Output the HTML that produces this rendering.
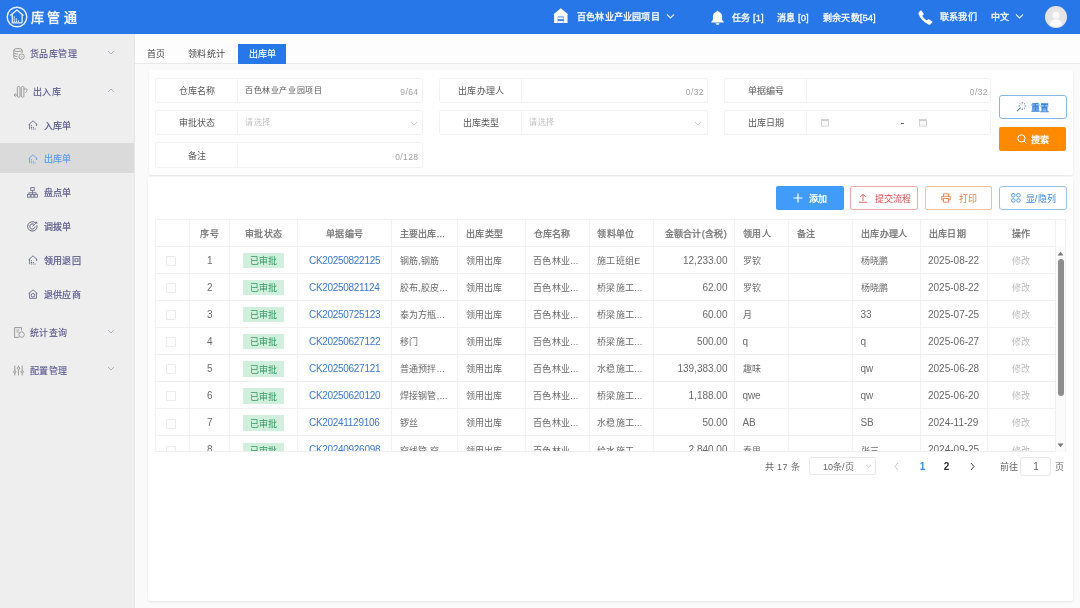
<!DOCTYPE html>
<html lang="zh-CN">
<head>
<meta charset="utf-8">
<style>
*{box-sizing:border-box;margin:0;padding:0}
html,body{width:1080px;height:608px;overflow:hidden;background:#f9f9f9;font-family:"Liberation Sans",sans-serif;color:#555;position:relative}
.abs{position:absolute}
#hdr{position:absolute;left:0;top:0;width:1080px;height:34px;background:#2877e8;color:#fff;z-index:5}
.t{position:absolute;white-space:nowrap;line-height:1}
</style>
</head>
<body>
<div style="position:absolute;left:0;top:0;width:1080px;height:608px;overflow:hidden;filter:blur(0.3px)">
<div class="abs" style="left:0px;top:34px;width:134px;height:574px;background:#eeeeef"></div>
<div class="abs" style="left:134px;top:34px;width:1px;height:574px;background:#e6e6e6"></div>
<div class="abs" style="left:0px;top:143px;width:134px;height:30px;background:#dadada"></div>
<svg class="abs" style="left:13px;top:47.5px" width="12" height="12" viewBox="0 0 12 12"><ellipse cx="5" cy="2" rx="4.2" ry="1.5" fill="none" stroke="#929292" stroke-width="0.9"/><path d="M0.8 2v7.6c0 0.8 1.9 1.5 4.2 1.5M9.2 2v3M0.8 4.6c0 0.8 1.9 1.5 4.2 1.5M0.8 7.1c0 0.8 1.9 1.5 3.6 1.5" fill="none" stroke="#929292" stroke-width="0.9"/><circle cx="8.6" cy="8.6" r="2.7" fill="#eeeeef" stroke="#929292" stroke-width="0.9"/><path d="M7.4 8.6l0.9 0.9 1.5-1.6" fill="none" stroke="#929292" stroke-width="0.8"/></svg>
<div class="t" style="top:50.30px;font-size:9px;letter-spacing:0.4px;color:#55558a;-webkit-text-stroke:0.1px #55558a;left:30px;">货品库管理</div>
<svg class="abs" style="left:107px;top:50px" width="8" height="5" viewBox="0 0 8 5"><path d="M1 1 L4.0 4 L7 1" fill="none" stroke="#a8a8b4" stroke-width="0.9"/></svg>
<svg class="abs" style="left:13px;top:85.5px" width="15" height="12" viewBox="0 0 15 12"><rect x="4.3" y="0.6" width="2.6" height="10.6" rx="1" fill="none" stroke="#929292" stroke-width="0.9"/><rect x="8.3" y="0.6" width="2.6" height="10.6" rx="1" fill="none" stroke="#929292" stroke-width="0.9"/><path d="M4.3 9 H1 M2.6 7.4 L1 9 L2.6 10.6 M10.9 3 H13.6 C14.2 3 14.2 4.6 13.6 5.5 L12.4 6.8" fill="none" stroke="#929292" stroke-width="0.9"/></svg>
<div class="t" style="top:88.10px;font-size:9px;letter-spacing:0.4px;color:#55558a;-webkit-text-stroke:0.1px #55558a;left:33px;">出入库</div>
<svg class="abs" style="left:107px;top:88px" width="8" height="5" viewBox="0 0 8 5"><path d="M1 4 L4.0 1 L7 4" fill="none" stroke="#a8a8b4" stroke-width="0.9"/></svg>
<svg class="abs" style="left:28px;top:120px" width="10" height="10" viewBox="0 0 10 10"><path d="M0.6 4.8 L5 0.8 L9.4 4.8 M1.6 3.9 V9.3 M8.4 3.9 V6" fill="none" stroke="#6a6a88" stroke-width="0.9"/><path d="M3 5.2h1v1H3zM3 7h1v1H3zM4.8 7h1v1h-1zM3 8.6h1v0.8H3zM4.8 8.6h1v0.8h-1zM6.6 8.6h1v0.8h-1z" fill="#6a6a88"/></svg>
<div class="t" style="top:121.60px;font-size:9px;letter-spacing:0.4px;color:#55558a;-webkit-text-stroke:0.2px #55558a;left:43.6px;">入库单</div>
<svg class="abs" style="left:28px;top:153.5px" width="10" height="10" viewBox="0 0 10 10"><path d="M0.6 4.8 L5 0.8 L9.4 4.8 M1.6 3.9 V9.3 M8.4 3.9 V6" fill="none" stroke="#6aa3e8" stroke-width="0.9"/><path d="M3 5.2h1v1H3zM3 7h1v1H3zM4.8 7h1v1h-1zM3 8.6h1v0.8H3zM4.8 8.6h1v0.8h-1zM6.6 8.6h1v0.8h-1z" fill="#6aa3e8"/></svg>
<div class="t" style="top:154.80px;font-size:9px;letter-spacing:0.4px;color:#5b9be8;-webkit-text-stroke:0.2px #5b9be8;left:43.6px;">出库单</div>
<svg class="abs" style="left:27px;top:187px" width="11" height="11" viewBox="0 0 11 11"><rect x="3.8" y="0.6" width="3.4" height="2.9" fill="none" stroke="#6a6a88" stroke-width="0.85"/><path d="M5.5 3.5v2.2M1.9 7.4V5.7h7.2v1.7M5.5 5.7v1.7" fill="none" stroke="#6a6a88" stroke-width="0.85"/><rect x="0.5" y="7.4" width="2.8" height="2.8" fill="none" stroke="#6a6a88" stroke-width="0.85"/><rect x="4.1" y="7.4" width="2.8" height="2.8" fill="none" stroke="#6a6a88" stroke-width="0.85"/><rect x="7.7" y="7.4" width="2.8" height="2.8" fill="none" stroke="#6a6a88" stroke-width="0.85"/></svg>
<div class="t" style="top:189.00px;font-size:9px;letter-spacing:0.4px;color:#55558a;-webkit-text-stroke:0.2px #55558a;left:43.6px;">盘点单</div>
<svg class="abs" style="left:27px;top:221px" width="11" height="11" viewBox="0 0 11 11"><path d="M8.7 2.1 A4.7 4.7 0 1 0 9.9 4.2" fill="none" stroke="#6a6a88" stroke-width="1"/><path d="M7.2 3.6 A2.6 2.6 0 1 0 8 5.5" fill="none" stroke="#6a6a88" stroke-width="1"/><path d="M5.5 5.5 L9.6 1.4 M8.2 1.2 H9.8 V2.8" fill="none" stroke="#6a6a88" stroke-width="0.9"/></svg>
<div class="t" style="top:222.90px;font-size:9px;letter-spacing:0.4px;color:#55558a;-webkit-text-stroke:0.2px #55558a;left:43.6px;">调拨单</div>
<svg class="abs" style="left:28px;top:255px" width="10" height="10" viewBox="0 0 10 10"><path d="M0.6 4.8 L5 0.8 L9.4 4.8 M1.6 3.9 V9.3 M8.4 3.9 V6" fill="none" stroke="#6a6a88" stroke-width="0.9"/><path d="M3 5.2h1v1H3zM3 7h1v1H3zM4.8 7h1v1h-1zM3 8.6h1v0.8H3zM4.8 8.6h1v0.8h-1zM6.6 8.6h1v0.8h-1z" fill="#6a6a88"/></svg>
<div class="t" style="top:256.70px;font-size:9px;letter-spacing:0.4px;color:#55558a;-webkit-text-stroke:0.2px #55558a;left:43.6px;">领用退回</div>
<svg class="abs" style="left:28px;top:289px" width="10" height="10" viewBox="0 0 10 10"><path d="M0.6 4.6 L5 0.8 L9.4 4.6 M1.6 3.8 V9.3 H8.4 V3.8" fill="none" stroke="#6a6a88" stroke-width="0.9"/><circle cx="5" cy="6.3" r="1.8" fill="none" stroke="#6a6a88" stroke-width="0.9"/></svg>
<div class="t" style="top:290.50px;font-size:9px;letter-spacing:0.4px;color:#55558a;-webkit-text-stroke:0.2px #55558a;left:43.6px;">退供应商</div>
<svg class="abs" style="left:14px;top:327px" width="11" height="11" viewBox="0 0 11 11"><path d="M7.5 0.6H0.6V10.4H5 M7.5 0.6V3.5" fill="none" stroke="#929292" stroke-width="0.9"/><circle cx="7.6" cy="7.6" r="2.7" fill="none" stroke="#929292" stroke-width="0.9"/><path d="M2.3 3h3M2.3 5h2.5" stroke="#929292" stroke-width="0.8"/></svg>
<div class="t" style="top:329.30px;font-size:9px;letter-spacing:0.4px;color:#55558a;-webkit-text-stroke:0.1px #55558a;left:30px;">统计查询</div>
<svg class="abs" style="left:107px;top:329px" width="8" height="5" viewBox="0 0 8 5"><path d="M1 1 L4.0 4 L7 1" fill="none" stroke="#a8a8b4" stroke-width="0.9"/></svg>
<svg class="abs" style="left:13px;top:364.5px" width="11" height="11" viewBox="0 0 11 11"><path d="M1.8 0.5V10.5M5.5 0.5V10.5M9.2 0.5V10.5" stroke="#929292" stroke-width="0.9"/><circle cx="1.8" cy="6.8" r="1.2" fill="#eeeeef" stroke="#929292" stroke-width="0.9"/><circle cx="5.5" cy="3.2" r="1.2" fill="#eeeeef" stroke="#929292" stroke-width="0.9"/><circle cx="9.2" cy="6.8" r="1.2" fill="#eeeeef" stroke="#929292" stroke-width="0.9"/></svg>
<div class="t" style="top:367.00px;font-size:9px;letter-spacing:0.4px;color:#55558a;-webkit-text-stroke:0.1px #55558a;left:30px;">配置管理</div>
<svg class="abs" style="left:107px;top:366px" width="8" height="5" viewBox="0 0 8 5"><path d="M1 1 L4.0 4 L7 1" fill="none" stroke="#a8a8b4" stroke-width="0.9"/></svg>
<div class="abs" style="left:135px;top:34px;width:945px;height:574px;background:#fafafa"></div>
<div class="abs" style="left:135px;top:34px;width:945px;height:30px;background:#fdfdfd"></div>
<div class="abs" style="left:135px;top:63px;width:945px;height:1px;background:#e9e9e9"></div>
<div class="t" style="top:50.00px;font-size:9px;letter-spacing:0.3px;color:#444;left:147px;">首页</div>
<div class="t" style="top:50.00px;font-size:9px;letter-spacing:0.3px;color:#444;left:188px;">领料统计</div>
<div class="abs" style="left:238px;top:44px;width:48px;height:20px;background:#2877e8"></div>
<div class="t" style="top:50.00px;font-size:9px;letter-spacing:0.3px;color:#fff;-webkit-text-stroke:0.15px #fff;left:248.5px;">出库单</div>
<div class="abs" style="left:148.5px;top:69.5px;width:924.5px;height:105.5px;background:#fff;box-shadow:0 1px 2px rgba(0,0,0,0.09);border-radius:2px"></div>
<div class="abs" style="left:155px;top:78px;width:267.5px;height:25.3px;border:1px solid #f2f2f2;border-radius:2.5px"></div>
<div class="abs" style="left:237px;top:78px;width:1px;height:25.3px;background:#f2f2f2"></div>
<div class="t" style="top:87.45px;font-size:9px;letter-spacing:0.3px;color:#585858;left:97.19999999999999px;width:200px;text-align:center;">仓库名称</div>
<div class="abs" style="left:439px;top:78px;width:268.5px;height:25.3px;border:1px solid #f2f2f2;border-radius:2.5px"></div>
<div class="abs" style="left:521px;top:78px;width:1px;height:25.3px;background:#f2f2f2"></div>
<div class="t" style="top:87.45px;font-size:9px;letter-spacing:0.3px;color:#585858;left:381.2px;width:200px;text-align:center;">出库办理人</div>
<div class="abs" style="left:724px;top:78px;width:267px;height:25.3px;border:1px solid #f2f2f2;border-radius:2.5px"></div>
<div class="abs" style="left:806px;top:78px;width:1px;height:25.3px;background:#f2f2f2"></div>
<div class="t" style="top:87.45px;font-size:9px;letter-spacing:0.3px;color:#585858;left:666.2px;width:200px;text-align:center;">单据编号</div>
<div class="abs" style="left:155px;top:110px;width:267.5px;height:25.3px;border:1px solid #f2f2f2;border-radius:2.5px"></div>
<div class="abs" style="left:237px;top:110px;width:1px;height:25.3px;background:#f2f2f2"></div>
<div class="t" style="top:119.45px;font-size:9px;letter-spacing:0.3px;color:#585858;left:97.19999999999999px;width:200px;text-align:center;">审批状态</div>
<div class="abs" style="left:439px;top:110px;width:268.5px;height:25.3px;border:1px solid #f2f2f2;border-radius:2.5px"></div>
<div class="abs" style="left:521px;top:110px;width:1px;height:25.3px;background:#f2f2f2"></div>
<div class="t" style="top:119.45px;font-size:9px;letter-spacing:0.3px;color:#585858;left:381.2px;width:200px;text-align:center;">出库类型</div>
<div class="abs" style="left:724px;top:110px;width:267px;height:25.3px;border:1px solid #f2f2f2;border-radius:2.5px"></div>
<div class="abs" style="left:806px;top:110px;width:1px;height:25.3px;background:#f2f2f2"></div>
<div class="t" style="top:119.45px;font-size:9px;letter-spacing:0.3px;color:#585858;left:666.2px;width:200px;text-align:center;">出库日期</div>
<div class="abs" style="left:155px;top:142.3px;width:267.5px;height:25.3px;border:1px solid #f2f2f2;border-radius:2.5px"></div>
<div class="abs" style="left:237px;top:142.3px;width:1px;height:25.3px;background:#f2f2f2"></div>
<div class="t" style="top:151.75px;font-size:9px;letter-spacing:0.3px;color:#585858;left:97.19999999999999px;width:200px;text-align:center;">备注</div>
<div class="t" style="top:87.40px;font-size:8px;letter-spacing:0.6px;color:#555;left:245px;">百色林业产业园项目</div>
<div class="t" style="top:87.75px;font-size:8.5px;letter-spacing:0.4px;color:#a0a0a0;right:661.5px;">9/64</div>
<div class="t" style="top:87.75px;font-size:8.5px;letter-spacing:0.4px;color:#a0a0a0;right:376px;">0/32</div>
<div class="t" style="top:87.75px;font-size:8.5px;letter-spacing:0.4px;color:#a0a0a0;right:92px;">0/32</div>
<div class="t" style="top:119.40px;font-size:8px;letter-spacing:0.6px;color:#c2c2c2;left:245px;">请选择</div>
<svg class="abs" style="left:410px;top:120.5px" width="8" height="5" viewBox="0 0 8 5"><path d="M1 1 L4.0 4 L7 1" fill="none" stroke="#c0c0c0" stroke-width="0.9"/></svg>
<div class="t" style="top:119.40px;font-size:8px;letter-spacing:0.6px;color:#c2c2c2;left:529px;">请选择</div>
<svg class="abs" style="left:694px;top:120.5px" width="8" height="5" viewBox="0 0 8 5"><path d="M1 1 L4.0 4 L7 1" fill="none" stroke="#c0c0c0" stroke-width="0.9"/></svg>
<div class="t" style="top:152.55px;font-size:8.5px;letter-spacing:0.4px;color:#a0a0a0;right:661.5px;">0/128</div>
<svg class="abs" style="left:821px;top:119px" width="8" height="8" viewBox="0 0 8 8"><rect x="0.5" y="0.5" width="7" height="6.6" fill="none" stroke="#cfcfcf" stroke-width="0.9"/><path d="M0.5 1.6h7" stroke="#cfcfcf" stroke-width="1.2"/><path d="M1.5 4h5M1.5 5.5h5" stroke="#ececec" stroke-width="0.7"/></svg>
<div class="abs" style="left:901px;top:123px;width:3px;height:1px;background:#666"></div>
<svg class="abs" style="left:919px;top:119px" width="8" height="8" viewBox="0 0 8 8"><rect x="0.5" y="0.5" width="7" height="6.6" fill="none" stroke="#cfcfcf" stroke-width="0.9"/><path d="M0.5 1.6h7" stroke="#cfcfcf" stroke-width="1.2"/><path d="M1.5 4h5M1.5 5.5h5" stroke="#ececec" stroke-width="0.7"/></svg>
<div class="abs" style="left:999px;top:94.5px;width:67.5px;height:24px;border:1px solid #86b6ec;border-radius:3px;background:#fff"></div>
<svg class="abs" style="left:1016px;top:100px" width="13" height="12" viewBox="0 0 13 12"><path d="M1 11.2 L4.6 7.6" stroke="#5579b0" stroke-width="1.1"/><path d="M6.3 2v1.6M6.3 8.4V10M2.4 6H4M8.6 6h1.6M3.6 3.3l1.1 1.1M9 3.3L7.9 4.4M9 8.7L7.9 7.6" stroke="#5579b0" stroke-width="0.9"/></svg>
<div class="t" style="top:103.60px;font-size:9px;letter-spacing:0.3px;color:#3d86dc;font-weight:bold;left:1031px;">重置</div>
<div class="abs" style="left:999px;top:126.5px;width:67px;height:24px;border-radius:2px;background:#ff8a00"></div>
<svg class="abs" style="left:1016.5px;top:134px" width="10" height="10" viewBox="0 0 10 10"><circle cx="4.4" cy="4.4" r="3.6" fill="none" stroke="#fff" stroke-width="1"/><path d="M7 7 L9.3 9.3" stroke="#fff" stroke-width="1"/></svg>
<div class="t" style="top:135.50px;font-size:9px;letter-spacing:0.3px;color:#fff;font-weight:bold;left:1031px;">搜索</div>
<div class="abs" style="left:148px;top:177px;width:925px;height:423.5px;background:#fff;box-shadow:0 1px 2px rgba(0,0,0,0.09);border-radius:2px"></div>
<div class="abs" style="left:776px;top:186px;width:68px;height:24px;border-radius:2px;background:#409cf8"></div>
<svg class="abs" style="left:792.5px;top:193px" width="10" height="10" viewBox="0 0 10 10"><path d="M5 0.5V9.5M0.5 5H9.5" stroke="#fff" stroke-width="1.2"/></svg>
<div class="t" style="top:195.10px;font-size:9px;letter-spacing:0.3px;color:#fff;font-weight:bold;left:809px;">添加</div>
<div class="abs" style="left:850px;top:186px;width:68px;height:24px;border:1px solid #eaa8a8;border-radius:2px;background:#fff"></div>
<svg class="abs" style="left:858px;top:193px" width="10" height="10" viewBox="0 0 10 10"><path d="M5 8V1.2M2.2 4L5 1.2 7.8 4M0.8 9.3H9.2" fill="none" stroke="#e05a5a" stroke-width="0.9"/></svg>
<div class="t" style="top:195.10px;font-size:9px;letter-spacing:0.3px;color:#de4848;left:874.5px;">提交流程</div>
<div class="abs" style="left:925px;top:186px;width:67px;height:24px;border:1px solid #f0c0a4;border-radius:2px;background:#fff"></div>
<svg class="abs" style="left:941px;top:193px" width="10" height="10" viewBox="0 0 10 10"><path d="M2.5 3.3V0.8h5v2.5M2.5 7H0.8V3.3h8.4V7H7.5M2.5 5.5h5v3.7h-5z" fill="none" stroke="#e8804a" stroke-width="0.9"/></svg>
<div class="t" style="top:195.10px;font-size:9px;letter-spacing:0.3px;color:#e27a40;left:958.5px;">打印</div>
<div class="abs" style="left:999px;top:186px;width:67.5px;height:24px;border:1px solid #98c2ee;border-radius:3px;background:#fff"></div>
<svg class="abs" style="left:1010.5px;top:193px" width="10" height="10" viewBox="0 0 10 10"><circle cx="2.3" cy="2.3" r="1.8" fill="none" stroke="#4a8fe0" stroke-width="0.9"/><circle cx="7.5" cy="2.3" r="1.8" fill="none" stroke="#4a8fe0" stroke-width="0.9"/><circle cx="2.3" cy="7.5" r="1.8" fill="none" stroke="#4a8fe0" stroke-width="0.9"/><circle cx="7.5" cy="7.5" r="1.8" fill="none" stroke="#4a8fe0" stroke-width="0.9"/></svg>
<div class="t" style="top:195.10px;font-size:9px;letter-spacing:0.3px;color:#3a84da;left:1025.5px;">显/隐列</div>
<div class="abs" style="left:155px;top:219.4px;width:910.5px;height:232.29999999999998px;overflow:hidden;border:1px solid #f2f2f2;border-bottom:none">
<div class="abs" style="left:32.90px;top:0;width:1px;height:232.29999999999998px;background:#f2f2f2"></div>
<div class="abs" style="left:73.40px;top:0;width:1px;height:232.29999999999998px;background:#f2f2f2"></div>
<div class="abs" style="left:141.00px;top:0;width:1px;height:232.29999999999998px;background:#f2f2f2"></div>
<div class="abs" style="left:234.90px;top:0;width:1px;height:232.29999999999998px;background:#f2f2f2"></div>
<div class="abs" style="left:301.40px;top:0;width:1px;height:232.29999999999998px;background:#f2f2f2"></div>
<div class="abs" style="left:369.00px;top:0;width:1px;height:232.29999999999998px;background:#f2f2f2"></div>
<div class="abs" style="left:432.70px;top:0;width:1px;height:232.29999999999998px;background:#f2f2f2"></div>
<div class="abs" style="left:497.40px;top:0;width:1px;height:232.29999999999998px;background:#f2f2f2"></div>
<div class="abs" style="left:578.40px;top:0;width:1px;height:232.29999999999998px;background:#f2f2f2"></div>
<div class="abs" style="left:631.90px;top:0;width:1px;height:232.29999999999998px;background:#f2f2f2"></div>
<div class="abs" style="left:696.40px;top:0;width:1px;height:232.29999999999998px;background:#f2f2f2"></div>
<div class="abs" style="left:764.10px;top:0;width:1px;height:232.29999999999998px;background:#f2f2f2"></div>
<div class="abs" style="left:830.60px;top:0;width:1px;height:232.29999999999998px;background:#f2f2f2"></div>
<div class="abs" style="left:898.70px;top:0;width:1px;height:232.29999999999998px;background:#f2f2f2"></div>
<div class="abs" style="left:0;top:25.40px;width:900.3px;height:1px;background:#f0f0f0"></div>
<div class="abs" style="left:0;top:52.50px;width:900.3px;height:1px;background:#f0f0f0"></div>
<div class="abs" style="left:0;top:79.60px;width:900.3px;height:1px;background:#f0f0f0"></div>
<div class="abs" style="left:0;top:106.70px;width:900.3px;height:1px;background:#f0f0f0"></div>
<div class="abs" style="left:0;top:133.80px;width:900.3px;height:1px;background:#f0f0f0"></div>
<div class="abs" style="left:0;top:160.90px;width:900.3px;height:1px;background:#f0f0f0"></div>
<div class="abs" style="left:0;top:188.00px;width:900.3px;height:1px;background:#f0f0f0"></div>
<div class="abs" style="left:0;top:215.10px;width:900.3px;height:1px;background:#f0f0f0"></div>
<div class="abs" style="left:0;top:242.20px;width:900.3px;height:1px;background:#f0f0f0"></div>
</div>
<div class="abs" style="left:0;top:0;width:1080px;height:451.7px;overflow:hidden">
<div class="t" style="top:230.40px;font-size:9px;letter-spacing:0.3px;color:#727272;-webkit-text-stroke:0.25px #727272;left:109.75px;width:200px;text-align:center;">序号</div>
<div class="t" style="top:230.40px;font-size:9px;letter-spacing:0.3px;color:#727272;-webkit-text-stroke:0.25px #727272;left:163.8px;width:200px;text-align:center;">审批状态</div>
<div class="t" style="top:230.40px;font-size:9px;letter-spacing:0.3px;color:#727272;-webkit-text-stroke:0.25px #727272;left:244.55px;width:200px;text-align:center;">单据编号</div>
<div class="t" style="top:230.40px;font-size:9px;letter-spacing:0.3px;color:#727272;-webkit-text-stroke:0.25px #727272;left:399.5px;">主要出库...</div>
<div class="t" style="top:230.40px;font-size:9px;letter-spacing:0.3px;color:#727272;-webkit-text-stroke:0.25px #727272;left:466px;">出库类型</div>
<div class="t" style="top:230.40px;font-size:9px;letter-spacing:0.3px;color:#727272;-webkit-text-stroke:0.25px #727272;left:533.6px;">仓库名称</div>
<div class="t" style="top:230.40px;font-size:9px;letter-spacing:0.3px;color:#727272;-webkit-text-stroke:0.25px #727272;left:597.3px;">领料单位</div>
<div class="t" style="top:230.40px;font-size:9px;letter-spacing:0.3px;color:#727272;-webkit-text-stroke:0.25px #727272;right:353px;">金额合计(含税)</div>
<div class="t" style="top:230.40px;font-size:9px;letter-spacing:0.3px;color:#727272;-webkit-text-stroke:0.25px #727272;left:743px;">领用人</div>
<div class="t" style="top:230.40px;font-size:9px;letter-spacing:0.3px;color:#727272;-webkit-text-stroke:0.25px #727272;left:796.5px;">备注</div>
<div class="t" style="top:230.40px;font-size:9px;letter-spacing:0.3px;color:#727272;-webkit-text-stroke:0.25px #727272;left:861px;">出库办理人</div>
<div class="t" style="top:230.40px;font-size:9px;letter-spacing:0.3px;color:#727272;-webkit-text-stroke:0.25px #727272;left:928.7px;">出库日期</div>
<div class="t" style="top:230.40px;font-size:9px;letter-spacing:0.3px;color:#727272;-webkit-text-stroke:0.25px #727272;left:921.25px;width:200px;text-align:center;">操作</div>
<div class="abs" style="left:165.8px;top:255.95px;width:10px;height:10px;border:1px solid #ebebeb;border-radius:1px;background:#fff"></div>
<div class="t" style="top:255.55px;font-size:10px;letter-spacing:0px;color:#6a6a6a;left:109.75px;width:200px;text-align:center;">1</div>
<div class="abs" style="left:243px;top:252.85px;width:41px;height:15.3px;background:#d0efdd"></div>
<div class="t" style="top:257.15px;font-size:9px;letter-spacing:0.3px;color:#2f9a60;left:163.5px;width:200px;text-align:center;">已审批</div>
<div class="t" style="top:255.55px;font-size:10px;letter-spacing:-0.3px;color:#3c78cc;left:309px;">CK20250822125</div>
<div class="t" style="top:256.85px;font-size:9px;letter-spacing:0.3px;color:#6a6a6a;left:399.5px;">钢筋,钢筋</div>
<div class="t" style="top:256.85px;font-size:9px;letter-spacing:0.3px;color:#6a6a6a;left:465.5px;">领用出库</div>
<div class="t" style="top:256.85px;font-size:9px;letter-spacing:0.3px;color:#6a6a6a;left:533px;">百色林业...</div>
<div class="t" style="top:256.85px;font-size:9px;letter-spacing:0.3px;color:#6a6a6a;left:597px;">施工班组E</div>
<div class="t" style="top:255.55px;font-size:10px;letter-spacing:0px;color:#6a6a6a;right:352.5px;">12,233.00</div>
<div class="t" style="top:256.85px;font-size:9px;letter-spacing:0.3px;color:#6a6a6a;left:742.5px;">罗钦</div>
<div class="t" style="top:256.85px;font-size:9px;letter-spacing:0.3px;color:#6a6a6a;left:860.5px;">杨晓鹏</div>
<div class="t" style="top:255.55px;font-size:10px;letter-spacing:0px;color:#6a6a6a;left:928px;">2025-08-22</div>
<div class="t" style="top:256.85px;font-size:9px;letter-spacing:0.3px;color:#bbb;left:921px;width:200px;text-align:center;">修改</div>
<div class="abs" style="left:165.8px;top:283.05px;width:10px;height:10px;border:1px solid #ebebeb;border-radius:1px;background:#fff"></div>
<div class="t" style="top:282.65px;font-size:10px;letter-spacing:0px;color:#6a6a6a;left:109.75px;width:200px;text-align:center;">2</div>
<div class="abs" style="left:243px;top:279.95px;width:41px;height:15.3px;background:#d0efdd"></div>
<div class="t" style="top:284.25px;font-size:9px;letter-spacing:0.3px;color:#2f9a60;left:163.5px;width:200px;text-align:center;">已审批</div>
<div class="t" style="top:282.65px;font-size:10px;letter-spacing:-0.3px;color:#3c78cc;left:309px;">CK20250821124</div>
<div class="t" style="top:283.95px;font-size:9px;letter-spacing:0.3px;color:#6a6a6a;left:399.5px;">胶布,胶皮...</div>
<div class="t" style="top:283.95px;font-size:9px;letter-spacing:0.3px;color:#6a6a6a;left:465.5px;">领用出库</div>
<div class="t" style="top:283.95px;font-size:9px;letter-spacing:0.3px;color:#6a6a6a;left:533px;">百色林业...</div>
<div class="t" style="top:283.95px;font-size:9px;letter-spacing:0.3px;color:#6a6a6a;left:597px;">桥梁施工...</div>
<div class="t" style="top:282.65px;font-size:10px;letter-spacing:0px;color:#6a6a6a;right:352.5px;">62.00</div>
<div class="t" style="top:283.95px;font-size:9px;letter-spacing:0.3px;color:#6a6a6a;left:742.5px;">罗钦</div>
<div class="t" style="top:283.95px;font-size:9px;letter-spacing:0.3px;color:#6a6a6a;left:860.5px;">杨晓鹏</div>
<div class="t" style="top:282.65px;font-size:10px;letter-spacing:0px;color:#6a6a6a;left:928px;">2025-08-22</div>
<div class="t" style="top:283.95px;font-size:9px;letter-spacing:0.3px;color:#bbb;left:921px;width:200px;text-align:center;">修改</div>
<div class="abs" style="left:165.8px;top:310.15px;width:10px;height:10px;border:1px solid #ebebeb;border-radius:1px;background:#fff"></div>
<div class="t" style="top:309.75px;font-size:10px;letter-spacing:0px;color:#6a6a6a;left:109.75px;width:200px;text-align:center;">3</div>
<div class="abs" style="left:243px;top:307.05px;width:41px;height:15.3px;background:#d0efdd"></div>
<div class="t" style="top:311.35px;font-size:9px;letter-spacing:0.3px;color:#2f9a60;left:163.5px;width:200px;text-align:center;">已审批</div>
<div class="t" style="top:309.75px;font-size:10px;letter-spacing:-0.3px;color:#3c78cc;left:309px;">CK20250725123</div>
<div class="t" style="top:311.05px;font-size:9px;letter-spacing:0.3px;color:#6a6a6a;left:399.5px;">泰为方瓶...</div>
<div class="t" style="top:311.05px;font-size:9px;letter-spacing:0.3px;color:#6a6a6a;left:465.5px;">领用出库</div>
<div class="t" style="top:311.05px;font-size:9px;letter-spacing:0.3px;color:#6a6a6a;left:533px;">百色林业...</div>
<div class="t" style="top:311.05px;font-size:9px;letter-spacing:0.3px;color:#6a6a6a;left:597px;">桥梁施工...</div>
<div class="t" style="top:309.75px;font-size:10px;letter-spacing:0px;color:#6a6a6a;right:352.5px;">60.00</div>
<div class="t" style="top:311.05px;font-size:9px;letter-spacing:0.3px;color:#6a6a6a;left:742.5px;">月</div>
<div class="t" style="top:309.75px;font-size:10px;letter-spacing:-0.1px;color:#6a6a6a;left:860.5px;">33</div>
<div class="t" style="top:309.75px;font-size:10px;letter-spacing:0px;color:#6a6a6a;left:928px;">2025-07-25</div>
<div class="t" style="top:311.05px;font-size:9px;letter-spacing:0.3px;color:#bbb;left:921px;width:200px;text-align:center;">修改</div>
<div class="abs" style="left:165.8px;top:337.25px;width:10px;height:10px;border:1px solid #ebebeb;border-radius:1px;background:#fff"></div>
<div class="t" style="top:336.85px;font-size:10px;letter-spacing:0px;color:#6a6a6a;left:109.75px;width:200px;text-align:center;">4</div>
<div class="abs" style="left:243px;top:334.15px;width:41px;height:15.3px;background:#d0efdd"></div>
<div class="t" style="top:338.45px;font-size:9px;letter-spacing:0.3px;color:#2f9a60;left:163.5px;width:200px;text-align:center;">已审批</div>
<div class="t" style="top:336.85px;font-size:10px;letter-spacing:-0.3px;color:#3c78cc;left:309px;">CK20250627122</div>
<div class="t" style="top:338.15px;font-size:9px;letter-spacing:0.3px;color:#6a6a6a;left:399.5px;">移门</div>
<div class="t" style="top:338.15px;font-size:9px;letter-spacing:0.3px;color:#6a6a6a;left:465.5px;">领用出库</div>
<div class="t" style="top:338.15px;font-size:9px;letter-spacing:0.3px;color:#6a6a6a;left:533px;">百色林业...</div>
<div class="t" style="top:338.15px;font-size:9px;letter-spacing:0.3px;color:#6a6a6a;left:597px;">桥梁施工...</div>
<div class="t" style="top:336.85px;font-size:10px;letter-spacing:0px;color:#6a6a6a;right:352.5px;">500.00</div>
<div class="t" style="top:336.85px;font-size:10px;letter-spacing:-0.1px;color:#6a6a6a;left:742.5px;">q</div>
<div class="t" style="top:336.85px;font-size:10px;letter-spacing:-0.1px;color:#6a6a6a;left:860.5px;">q</div>
<div class="t" style="top:336.85px;font-size:10px;letter-spacing:0px;color:#6a6a6a;left:928px;">2025-06-27</div>
<div class="t" style="top:338.15px;font-size:9px;letter-spacing:0.3px;color:#bbb;left:921px;width:200px;text-align:center;">修改</div>
<div class="abs" style="left:165.8px;top:364.35px;width:10px;height:10px;border:1px solid #ebebeb;border-radius:1px;background:#fff"></div>
<div class="t" style="top:363.95px;font-size:10px;letter-spacing:0px;color:#6a6a6a;left:109.75px;width:200px;text-align:center;">5</div>
<div class="abs" style="left:243px;top:361.25px;width:41px;height:15.3px;background:#d0efdd"></div>
<div class="t" style="top:365.55px;font-size:9px;letter-spacing:0.3px;color:#2f9a60;left:163.5px;width:200px;text-align:center;">已审批</div>
<div class="t" style="top:363.95px;font-size:10px;letter-spacing:-0.3px;color:#3c78cc;left:309px;">CK20250627121</div>
<div class="t" style="top:365.25px;font-size:9px;letter-spacing:0.3px;color:#6a6a6a;left:399.5px;">普通预拌...</div>
<div class="t" style="top:365.25px;font-size:9px;letter-spacing:0.3px;color:#6a6a6a;left:465.5px;">领用出库</div>
<div class="t" style="top:365.25px;font-size:9px;letter-spacing:0.3px;color:#6a6a6a;left:533px;">百色林业...</div>
<div class="t" style="top:365.25px;font-size:9px;letter-spacing:0.3px;color:#6a6a6a;left:597px;">水稳施工...</div>
<div class="t" style="top:363.95px;font-size:10px;letter-spacing:0px;color:#6a6a6a;right:352.5px;">139,383.00</div>
<div class="t" style="top:365.25px;font-size:9px;letter-spacing:0.3px;color:#6a6a6a;left:742.5px;">趣味</div>
<div class="t" style="top:363.95px;font-size:10px;letter-spacing:-0.1px;color:#6a6a6a;left:860.5px;">qw</div>
<div class="t" style="top:363.95px;font-size:10px;letter-spacing:0px;color:#6a6a6a;left:928px;">2025-06-28</div>
<div class="t" style="top:365.25px;font-size:9px;letter-spacing:0.3px;color:#bbb;left:921px;width:200px;text-align:center;">修改</div>
<div class="abs" style="left:165.8px;top:391.45px;width:10px;height:10px;border:1px solid #ebebeb;border-radius:1px;background:#fff"></div>
<div class="t" style="top:391.05px;font-size:10px;letter-spacing:0px;color:#6a6a6a;left:109.75px;width:200px;text-align:center;">6</div>
<div class="abs" style="left:243px;top:388.35px;width:41px;height:15.3px;background:#d0efdd"></div>
<div class="t" style="top:392.65px;font-size:9px;letter-spacing:0.3px;color:#2f9a60;left:163.5px;width:200px;text-align:center;">已审批</div>
<div class="t" style="top:391.05px;font-size:10px;letter-spacing:-0.3px;color:#3c78cc;left:309px;">CK20250620120</div>
<div class="t" style="top:392.35px;font-size:9px;letter-spacing:0.3px;color:#6a6a6a;left:399.5px;">焊接钢管,...</div>
<div class="t" style="top:392.35px;font-size:9px;letter-spacing:0.3px;color:#6a6a6a;left:465.5px;">领用出库</div>
<div class="t" style="top:392.35px;font-size:9px;letter-spacing:0.3px;color:#6a6a6a;left:533px;">百色林业...</div>
<div class="t" style="top:392.35px;font-size:9px;letter-spacing:0.3px;color:#6a6a6a;left:597px;">桥梁施工...</div>
<div class="t" style="top:391.05px;font-size:10px;letter-spacing:0px;color:#6a6a6a;right:352.5px;">1,188.00</div>
<div class="t" style="top:391.05px;font-size:10px;letter-spacing:-0.1px;color:#6a6a6a;left:742.5px;">qwe</div>
<div class="t" style="top:391.05px;font-size:10px;letter-spacing:-0.1px;color:#6a6a6a;left:860.5px;">qw</div>
<div class="t" style="top:391.05px;font-size:10px;letter-spacing:0px;color:#6a6a6a;left:928px;">2025-06-20</div>
<div class="t" style="top:392.35px;font-size:9px;letter-spacing:0.3px;color:#bbb;left:921px;width:200px;text-align:center;">修改</div>
<div class="abs" style="left:165.8px;top:418.55px;width:10px;height:10px;border:1px solid #ebebeb;border-radius:1px;background:#fff"></div>
<div class="t" style="top:418.15px;font-size:10px;letter-spacing:0px;color:#6a6a6a;left:109.75px;width:200px;text-align:center;">7</div>
<div class="abs" style="left:243px;top:415.45px;width:41px;height:15.3px;background:#d0efdd"></div>
<div class="t" style="top:419.75px;font-size:9px;letter-spacing:0.3px;color:#2f9a60;left:163.5px;width:200px;text-align:center;">已审批</div>
<div class="t" style="top:418.15px;font-size:10px;letter-spacing:-0.3px;color:#3c78cc;left:309px;">CK20241129106</div>
<div class="t" style="top:419.45px;font-size:9px;letter-spacing:0.3px;color:#6a6a6a;left:399.5px;">锣丝</div>
<div class="t" style="top:419.45px;font-size:9px;letter-spacing:0.3px;color:#6a6a6a;left:465.5px;">领用出库</div>
<div class="t" style="top:419.45px;font-size:9px;letter-spacing:0.3px;color:#6a6a6a;left:533px;">百色林业...</div>
<div class="t" style="top:419.45px;font-size:9px;letter-spacing:0.3px;color:#6a6a6a;left:597px;">水稳施工...</div>
<div class="t" style="top:418.15px;font-size:10px;letter-spacing:0px;color:#6a6a6a;right:352.5px;">50.00</div>
<div class="t" style="top:418.15px;font-size:10px;letter-spacing:-0.1px;color:#6a6a6a;left:742.5px;">AB</div>
<div class="t" style="top:418.15px;font-size:10px;letter-spacing:-0.1px;color:#6a6a6a;left:860.5px;">SB</div>
<div class="t" style="top:418.15px;font-size:10px;letter-spacing:0px;color:#6a6a6a;left:928px;">2024-11-29</div>
<div class="t" style="top:419.45px;font-size:9px;letter-spacing:0.3px;color:#bbb;left:921px;width:200px;text-align:center;">修改</div>
<div class="abs" style="left:165.8px;top:445.65px;width:10px;height:10px;border:1px solid #ebebeb;border-radius:1px;background:#fff"></div>
<div class="t" style="top:445.25px;font-size:10px;letter-spacing:0px;color:#6a6a6a;left:109.75px;width:200px;text-align:center;">8</div>
<div class="abs" style="left:243px;top:442.55px;width:41px;height:15.3px;background:#d0efdd"></div>
<div class="t" style="top:446.85px;font-size:9px;letter-spacing:0.3px;color:#2f9a60;left:163.5px;width:200px;text-align:center;">已审批</div>
<div class="t" style="top:445.25px;font-size:10px;letter-spacing:-0.3px;color:#3c78cc;left:309px;">CK20240926098</div>
<div class="t" style="top:446.55px;font-size:9px;letter-spacing:0.3px;color:#6a6a6a;left:399.5px;">穿线管,穿...</div>
<div class="t" style="top:446.55px;font-size:9px;letter-spacing:0.3px;color:#6a6a6a;left:465.5px;">领用出库</div>
<div class="t" style="top:446.55px;font-size:9px;letter-spacing:0.3px;color:#6a6a6a;left:533px;">百色林业...</div>
<div class="t" style="top:446.55px;font-size:9px;letter-spacing:0.3px;color:#6a6a6a;left:597px;">给水施工...</div>
<div class="t" style="top:445.25px;font-size:10px;letter-spacing:0px;color:#6a6a6a;right:352.5px;">2,840.00</div>
<div class="t" style="top:446.55px;font-size:9px;letter-spacing:0.3px;color:#6a6a6a;left:742.5px;">秦思</div>
<div class="t" style="top:446.55px;font-size:9px;letter-spacing:0.3px;color:#6a6a6a;left:860.5px;">张三</div>
<div class="t" style="top:445.25px;font-size:10px;letter-spacing:0px;color:#6a6a6a;left:928px;">2024-09-25</div>
<div class="t" style="top:446.55px;font-size:9px;letter-spacing:0.3px;color:#bbb;left:921px;width:200px;text-align:center;">修改</div>
</div>
<div class="abs" style="left:155px;top:450.7px;width:910.5px;height:1px;background:#efefef"></div>
<div class="abs" style="left:1055.3px;top:246.2px;width:10.2px;height:205.5px;background:#fbfbfb;border-left:1px solid #f0f0f0"></div>
<svg class="abs" style="left:1057px;top:250.5px" width="7" height="5" viewBox="0 0 7 5"><path d="M0.5 4.5 L3.5 0.8 L6.5 4.5Z" fill="#777"/></svg>
<svg class="abs" style="left:1057px;top:443px" width="7" height="5" viewBox="0 0 7 5"><path d="M0.5 0.5 L3.5 4.2 L6.5 0.5Z" fill="#777"/></svg>
<div class="abs" style="left:1058px;top:259px;width:6px;height:137px;background:#8e8e8e;border-radius:3px"></div>
<div class="t" style="top:462.60px;font-size:9px;letter-spacing:0.3px;color:#666;left:765px;">共 17 条</div>
<div class="abs" style="left:809.2px;top:457.2px;width:67.3px;height:18px;border:1px solid #e8e8e8;border-radius:2px"></div>
<div class="t" style="top:462.60px;font-size:9px;letter-spacing:0.0px;color:#666;left:823px;">10条/页</div>
<svg class="abs" style="left:865px;top:463.5px" width="7" height="4" viewBox="0 0 7 4"><path d="M1 1 L3.5 3 L6 1" fill="none" stroke="#c0c0c0" stroke-width="0.8"/></svg>
<svg class="abs" style="left:894px;top:462px" width="5" height="9" viewBox="0 0 5 9"><path d="M4 1 L1 4.5 L4 8" fill="none" stroke="#c4c4c4" stroke-width="1"/></svg>
<div class="t" style="top:461.80px;font-size:10px;letter-spacing:0px;color:#3a8ee6;font-weight:bold;left:822.5px;width:200px;text-align:center;">1</div>
<div class="t" style="top:461.80px;font-size:10px;letter-spacing:0px;color:#333;font-weight:bold;left:846.5px;width:200px;text-align:center;">2</div>
<svg class="abs" style="left:970px;top:462px" width="5" height="9" viewBox="0 0 5 9"><path d="M1 1 L4 4.5 L1 8" fill="none" stroke="#444" stroke-width="1"/></svg>
<div class="t" style="top:462.60px;font-size:9px;letter-spacing:0.3px;color:#666;left:999.5px;">前往</div>
<div class="abs" style="left:1020px;top:456.5px;width:31px;height:19px;border:1px solid #e8e8e8;border-radius:3px"></div>
<div class="t" style="top:461.80px;font-size:10px;letter-spacing:0px;color:#666;left:936px;width:200px;text-align:center;">1</div>
<div class="t" style="top:462.60px;font-size:9px;letter-spacing:0.3px;color:#666;left:1054.5px;">页</div>
<div id="hdr">
<svg class="abs" style="left:6px;top:6px" width="22" height="22" viewBox="0 0 22 22"><circle cx="11" cy="11" r="9.8" fill="none" stroke="#e6f0ff" stroke-width="1.4"/><path d="M4.3 9.6 L10.9 3.9 L17.5 9.6 M6.3 8.4 V16.8 H15.4 C15.9 16.8 16.1 16.5 16.1 16 V8.4" fill="none" stroke="#e6f0ff" stroke-width="1.3" stroke-linejoin="round"/><path d="M7.6 10.4h1.3v1.3H7.6zM7.6 12.5h1.3v1.3H7.6zM9.7 12.5h1.3v1.3H9.7zM7.6 14.6h1.3v1.3H7.6zM9.7 14.6h1.3v1.3H9.7zM11.8 14.6h1.3v1.3h-1.3z" fill="#e6f0ff"/></svg>
<div class="t" style="left:31px;top:11px;font-size:13px;font-weight:bold;letter-spacing:3.4px;color:#f4f8ff">库管通</div>
<svg class="abs" style="left:552.5px;top:8px" width="16" height="16" viewBox="0 0 16 16"><path d="M0.2 6.4 L7.8 0.3 L15.4 6.4 L14.5 6.4 V15 H10.9 V8.4 H4.7 V15 H1.1 V6.4 Z" fill="#fff"/><rect x="5" y="9.4" width="5.6" height="1.8" fill="#fff"/><rect x="5" y="12.9" width="5.6" height="2.1" fill="#eaf2ff"/></svg>
<div class="t" style="left:577px;top:13px;font-size:9px;letter-spacing:0.2px;color:#f6f9ff;-webkit-text-stroke:0.35px #f6f9ff">百色林业产业园项目</div>
<svg class="abs" style="left:666px;top:13px" width="9" height="7" viewBox="0 0 9 7"><path d="M1 1.5 L4.5 5 L8 1.5" fill="none" stroke="#dfeaff" stroke-width="1.1"/></svg>
<svg class="abs" style="left:710px;top:10px" width="15" height="15" viewBox="0 0 15 15"><path d="M7.5 0.8c0.7 0 1 0.4 1 0.9 2.4 0.5 3.6 2.4 3.6 5v3.2l1.6 1.9v0.8H1.3v-0.8l1.6-1.9V6.7c0-2.6 1.2-4.5 3.6-5 0-0.5 0.3-0.9 1-0.9z M5.6 13.2h3.8c0 1-0.9 1.6-1.9 1.6s-1.9-0.6-1.9-1.6z" fill="#fff"/></svg>
<div class="t" style="left:732px;top:13px;font-size:9px;letter-spacing:0.2px;color:#f6f9ff;-webkit-text-stroke:0.35px #f6f9ff">任务 <span style="font-weight:normal;font-size:9.5px;letter-spacing:0">[1]</span></div>
<div class="t" style="left:777px;top:13px;font-size:9px;letter-spacing:0.2px;color:#f6f9ff;-webkit-text-stroke:0.35px #f6f9ff">消息 <span style="font-weight:normal;font-size:9.5px;letter-spacing:0">[0]</span></div>
<div class="t" style="left:823px;top:13px;font-size:9px;letter-spacing:0.2px;color:#f6f9ff;-webkit-text-stroke:0.35px #f6f9ff">剩余天数<span style="font-weight:normal;font-size:9.5px;letter-spacing:0">[54]</span></div>
<svg class="abs" style="left:918px;top:10px" width="15" height="15" viewBox="0 0 15 15"><path d="M3.3 0.6 L5.6 3.6 C5.9 4 5.8 4.5 5.4 4.8 L4.3 5.6 C4.9 7.4 6.7 9.7 8.9 10.6 L9.8 9.5 C10.1 9.1 10.6 9 11 9.3 L14.2 11.5 C14.6 11.8 14.6 12.3 14.3 12.6 L12.8 14.1 C12.2 14.7 11.2 14.8 10.4 14.4 C5.8 12.2 2.6 8.6 0.7 4.4 C0.4 3.6 0.5 2.7 1.1 2.1 L2.3 0.7 C2.6 0.3 3 0.3 3.3 0.6Z" fill="#fff"/></svg>
<div class="t" style="left:940px;top:13px;font-size:9px;letter-spacing:0.2px;color:#f6f9ff;-webkit-text-stroke:0.35px #f6f9ff">联系我们</div>
<div class="t" style="left:991px;top:13px;font-size:9px;letter-spacing:0.2px;color:#f6f9ff;-webkit-text-stroke:0.35px #f6f9ff">中文</div>
<svg class="abs" style="left:1015px;top:13px" width="9" height="7" viewBox="0 0 9 7"><path d="M1 1.5 L4.5 5 L8 1.5" fill="none" stroke="#dfeaff" stroke-width="1.1"/></svg>
<svg class="abs" style="left:1045px;top:6px" width="22" height="22" viewBox="0 0 22 22"><circle cx="11" cy="11" r="11" fill="#e4e4e6"/><circle cx="11" cy="9" r="3.6" fill="#fafafa"/><path d="M4.8 18.5 C5.6 14.8 8 13.3 11 13.3 S16.4 14.8 17.2 18.5 C15.6 20 13.5 20.8 11 20.8 S6.4 20 4.8 18.5Z" fill="#fafafa"/></svg>
</div>

</div>
</body>
</html>
